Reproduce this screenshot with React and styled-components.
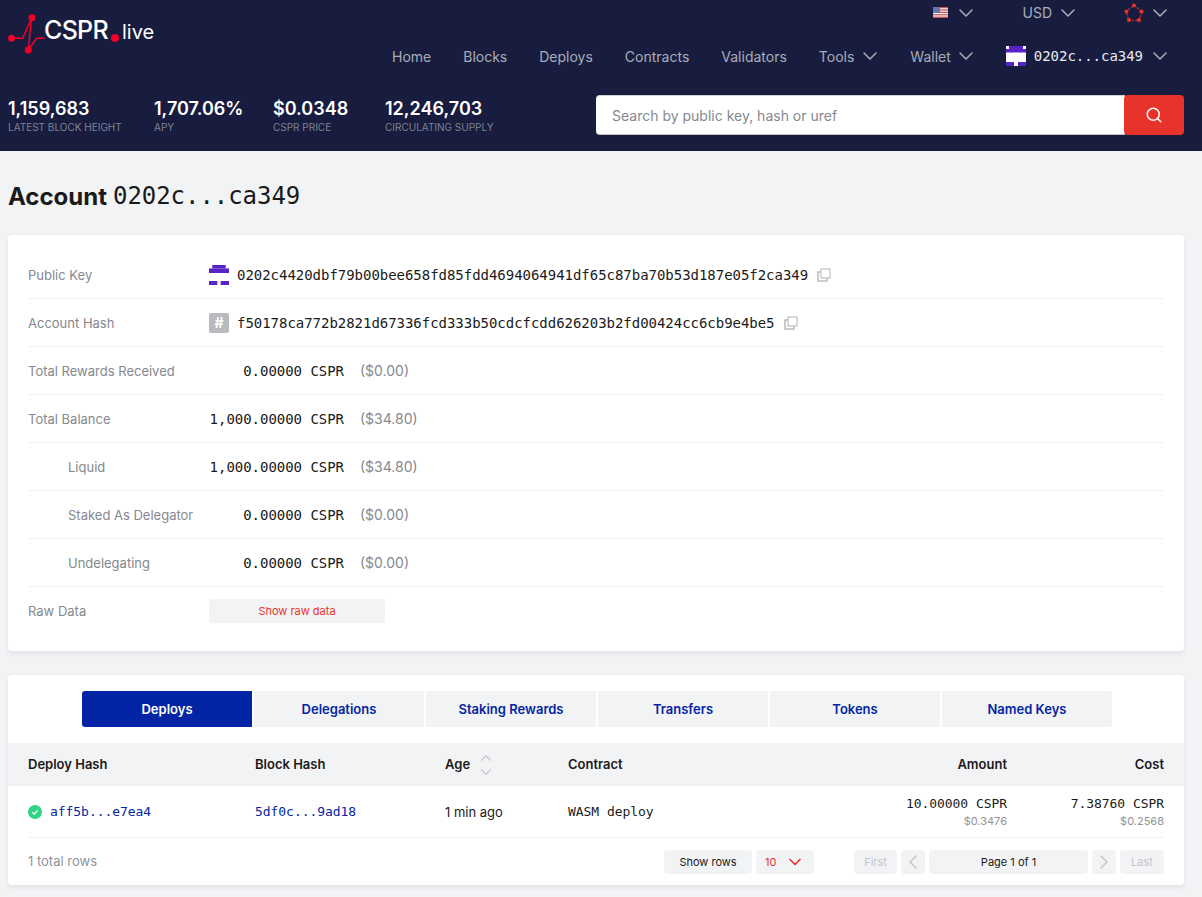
import React from "react";
import styled, { createGlobalStyle } from "styled-components";
import { ChevronDown, ChevronUp, ChevronLeft, ChevronRight, Search } from "lucide-react";

const mono = `"DejaVu Sans Mono", "Liberation Mono", monospace`;

const GlobalStyle = createGlobalStyle`
  html, body {
    margin: 0;
    padding: 0;
    background: #f2f3f5;
    font-family: Inter, "Noto Sans", sans-serif;
    color: #1a1a1a;
  }
  * { box-sizing: border-box; }
`;

const Header = styled.header`
  height: 151px;
  background: #181d40;
  padding: 0 18px 0 8px;
  display: flex;
  flex-direction: column;
`;

const TopArea = styled.div`
  display: flex;
  justify-content: space-between;
  height: 95px;
`;

const Logo = styled.div`
  display: flex;
  align-items: flex-start;
  padding-top: 5px;
  height: 60px;
`;

const LogoWord = styled.div`
  display: flex;
  align-items: baseline;
  color: #fff;
  margin-left: -2px;
  margin-top: 10px;
`;

const LogoMain = styled.span`
  font-size: 25px;
  font-weight: 500;
  letter-spacing: -0.7px;
`;

const LogoDot = styled.span`
  width: 8px;
  height: 8px;
  border-radius: 50%;
  background: #f2002a;
  margin: 0 3px;
  transform: translateY(3px);
`;

const LogoLive = styled.span`
  font-size: 20px;
  font-weight: 400;
`;

const NavArea = styled.div`
  display: flex;
  flex-direction: column;
  align-items: flex-end;
  padding-right: 16px;
`;

const TopSelectors = styled.div`
  height: 25px;
  display: flex;
  gap: 48px;
`;

const Selector = styled.div`
  display: flex;
  align-items: center;
  gap: ${(p) => p.$gap}px;
  font-size: 14px;
  color: #a9adb8;
`;

const Chevron = styled(ChevronDown).attrs({ size: 24, strokeWidth: 1.5, color: "#a9adb8" })`
  margin-right: -4px;
  flex-shrink: 0;
`;

const NavRow = styled.nav`
  display: flex;
  align-items: center;
  gap: 32px;
  height: 36px;
  margin-top: 13px;
`;

const NavLink = styled.a`
  font-size: 14px;
  color: #a9adb8;
  display: flex;
  align-items: center;
  gap: ${(p) => p.$gap || 4}px;
`;

const NavAccount = styled.div`
  display: flex;
  align-items: center;
  font-family: ${mono};
  font-size: 14px;
  letter-spacing: -0.03px;
  color: #e8eaf0;
`;

const NavAccountText = styled.span`
  margin: 0 5px 0 8px;
`;

const StatsArea = styled.div`
  display: flex;
  justify-content: space-between;
  align-items: flex-start;
`;

const Stats = styled.div`
  display: flex;
  padding-top: 3px;
`;

const Stat = styled.div`
  width: ${(p) => p.$width}px;
`;

const StatValue = styled.div`
  font-size: 18px;
  line-height: 22px;
  font-weight: 600;
  color: #fff;
`;

const StatLabel = styled.div`
  font-size: 10px;
  line-height: 14px;
  color: #7d8290;
  text-transform: uppercase;
  white-space: nowrap;
`;

const SearchBox = styled.div`
  display: flex;
  width: 588px;
  height: 40px;
`;

const SearchInput = styled.div`
  flex: 1;
  background: #fff;
  border-bottom: 1px solid #bdbdbd;
  border-top: 1px solid #d0d0d0;
  border-radius: 4px 0 0 4px;
  display: flex;
  align-items: center;
  padding-left: 16px;
  font-size: 14px;
  color: #85888f;
`;

const SearchButton = styled.button`
  width: 60px;
  border: none;
  background: #e8332a;
  border-radius: 4px;
  margin-left: -1px;
  display: flex;
  align-items: center;
  justify-content: center;
  color: #fff;
`;

const Main = styled.main`
  padding: 0 18px 12px 8px;
`;

const Title = styled.h1`
  margin: 0;
  height: 84px;
  display: flex;
  align-items: center;
  gap: 6px;
  font-size: 24px;
  font-weight: 700;
  color: #1a1a1a;
  padding-top: 6px;
`;

const TitleHash = styled.span`
  font-family: ${mono};
  font-weight: 400;
  letter-spacing: -0.05px;
`;

const Card = styled.section`
  background: #fff;
  border-radius: 4px;
  box-shadow: 0 2px 5px rgba(30, 40, 70, 0.08);
  padding: ${(p) => p.$padding};
  margin-bottom: 24px;
  &:last-child { margin-bottom: 0; }
`;

const InfoRow = styled.div`
  display: flex;
  align-items: center;
  height: 48px;
  border-bottom: 1px solid ${(p) => (p.$last ? "transparent" : "#f0f1f3")};
`;

const InfoLabel = styled.div`
  width: 181px;
  padding-left: ${(p) => (p.$indent ? 40 : 0)}px;
  font-size: 13px;
  color: #85888f;
  white-space: nowrap;
`;

const InfoValue = styled.div`
  display: flex;
  align-items: center;
`;

const MonoText = styled.span`
  font-family: ${mono};
  font-size: 14px;
  letter-spacing: -0.03px;
  color: #1a1a1a;
  white-space: nowrap;
`;

const HashText = styled(MonoText)`
  margin-left: 8px;
`;

const Amount = styled(MonoText)`
  width: 135px;
  text-align: right;
`;

const Fiat = styled.span`
  margin-left: 16px;
  font-size: 14px;
  color: #85888f;
`;

const HashBadge = styled.span`
  width: 20px;
  height: 20px;
  border-radius: 2px;
  background: #b9babd;
  color: #fff;
  font-size: 14px;
  font-weight: 700;
  display: flex;
  align-items: center;
  justify-content: center;
`;

const CopyWrap = styled.span`
  display: inline-flex;
  margin-left: 9px;
`;

const RawButton = styled.button`
  width: 176px;
  height: 24px;
  border: none;
  border-radius: 3px;
  background: #f2f3f5;
  color: #e8332a;
  font-family: inherit;
  font-size: 11px;
`;

const Tabs = styled.div`
  display: flex;
  justify-content: center;
  gap: 2px;
  margin-bottom: 16px;
  padding-left: 2px;
`;

const Tab = styled.div`
  width: 170px;
  height: 36px;
  display: flex;
  align-items: center;
  justify-content: center;
  font-size: 13px;
  font-weight: 600;
  color: ${(p) => (p.$active ? "#fff" : "#0325a5")};
  background: ${(p) => (p.$active ? "#0325a5" : "#f2f3f5")};
  border-radius: ${(p) => (p.$first ? "3px 0 0 3px" : p.$end ? "0 3px 3px 0" : "0")};
`;

const columns = "227px 190px 123px 1fr 157px 157px";

const TableHead = styled.div`
  display: grid;
  grid-template-columns: ${columns};
  align-items: center;
  height: 43px;
  padding: 0 20px 2px;
  background: #f2f3f5;
`;

const HeadCell = styled.div`
  display: flex;
  align-items: center;
  gap: 7px;
  font-size: 13px;
  font-weight: 600;
  color: #1a1a1a;
  justify-content: ${(p) => (p.$right ? "flex-end" : "flex-start")};
`;

const SortArrows = styled.span`
  display: flex;
  flex-direction: column;
  color: #c4c5c9;
  margin-top: 2px;
  svg { display: block; margin: -2px 0; }
`;

const TableBody = styled.div`
  padding: 0 20px;
`;

const TableRow = styled.div`
  display: grid;
  grid-template-columns: ${columns};
  align-items: center;
  height: 52px;
  border-bottom: 1px solid #f0f1f3;
`;

const Cell = styled.div`
  display: flex;
  align-items: ${(p) => (p.$right ? "flex-end" : "center")};
  flex-direction: ${(p) => (p.$right ? "column" : "row")};
  gap: ${(p) => (p.$right ? 3 : 8)}px;
`;

const LinkHash = styled.a`
  font-family: ${mono};
  font-size: 13px;
  letter-spacing: -0.05px;
  color: #0325a5;
`;

const PlainMono = styled.span`
  font-family: ${mono};
  font-size: 13px;
  letter-spacing: -0.05px;
  color: #1a1a1a;
`;

const AgeText = styled.span`
  font-size: 13px;
  color: #1a1a1a;
`;

const SubFiat = styled.span`
  font-size: 11px;
  color: #919398;
`;

const Footer = styled.div`
  display: flex;
  align-items: center;
  justify-content: space-between;
  height: 47px;
  padding: 0 20px;
`;

const RowCount = styled.span`
  font-size: 13px;
  color: #919398;
  margin-top: -1px;
`;

const Pager = styled.div`
  display: flex;
  align-items: center;
`;

const PagerGroup = styled.div`
  display: flex;
  gap: 4px;
  margin-left: ${(p) => p.$offset || 0}px;
`;

const PagerButton = styled.div`
  width: ${(p) => p.$width}px;
  height: 24px;
  border-radius: 4px;
  background: #f2f3f5;
  display: flex;
  align-items: center;
  justify-content: ${(p) => (p.$spread ? "space-between" : "center")};
  padding: ${(p) => (p.$spread ? "0 9px" : "0")};
  font-size: 11px;
  color: ${(p) => (p.$red ? "#e8332a" : p.$muted ? "#c4c5c9" : "#1a1a1a")};
`;

const Logomark = () => (
  <svg width="38" height="50" viewBox="0 0 38 50">
    <path d="M3 33.3H14.7L23.5 13L20.3 45L28.7 33.3H37" stroke="#f2002a" strokeWidth="1.5" fill="none" />
    <g fill="#f2002a">
      <circle cx="3.5" cy="33.3" r="3.5" />
      <circle cx="24" cy="12.7" r="3.5" />
      <circle cx="20.3" cy="45" r="3.5" />
    </g>
  </svg>
);

const Flag = () => (
  <svg width="15" height="11" viewBox="0 0 15 11">
    <rect width="15" height="11" fill="#f4eeee" />
    <g fill="#c9505a">
      <rect y="0" width="15" height="1.2" />
      <rect y="2.4" width="15" height="1.2" />
      <rect y="4.8" width="15" height="1.2" />
      <rect y="7.2" width="15" height="1.2" />
      <rect y="9.6" width="15" height="1.4" />
    </g>
    <rect width="7" height="6" fill="#6a74a8" />
  </svg>
);

const NetworkIcon = () => (
  <svg width="20" height="20" viewBox="0 0 20 20">
    <path d="M10 2.5L18 8.5L15 17.5H5L2 8.5Z" fill="none" stroke="#e8332a" strokeWidth="1.2" strokeDasharray="2 1.5" />
    <g fill="#e8332a">
      <circle cx="10" cy="2.5" r="2" />
      <circle cx="17.5" cy="8.5" r="2" />
      <circle cx="15" cy="17" r="2" />
      <circle cx="5" cy="17" r="2" />
      <circle cx="2.5" cy="8.5" r="2" />
    </g>
  </svg>
);

const NavAvatar = () => (
  <svg width="20" height="20" viewBox="0 0 20 20">
    <rect width="20" height="20" rx="1.5" fill="#5a23c8" />
    <rect y="6.5" width="20" height="9.5" fill="#fff" />
    <rect width="3" height="3" fill="#fff" />
    <rect x="17" width="3" height="3" fill="#fff" />
    <rect x="8" y="16" width="4" height="4" fill="#fff" />
  </svg>
);

const KeyAvatar = () => (
  <svg width="20" height="20" viewBox="0 0 20 20">
    <g fill="#5a23c8">
      <rect x="3.3" width="13.4" height="3.4" />
      <rect y="3.4" width="20" height="4.6" />
      <rect y="16" width="8.3" height="4" />
      <rect x="11.7" y="16" width="8.3" height="4" />
    </g>
  </svg>
);

const CopyIcon = () => (
  <svg width="14" height="14" viewBox="0 0 14 14" fill="none" stroke="#bdbec2" strokeWidth="1.2">
    <rect x="4" y="1" width="9" height="9" />
    <path d="M4 4H1V13H10V10" strokeWidth="1.6" />
  </svg>
);

const CheckBadge = () => (
  <svg width="14" height="14" viewBox="0 0 14 14">
    <circle cx="7" cy="7" r="7" fill="#2fd485" />
    <path d="M4.2 7.2L6.2 9L9.8 5.4" fill="none" stroke="#fff" strokeWidth="1.3" />
  </svg>
);

const stats = [
  { value: "1,159,683", label: "Latest Block Height", width: 146 },
  { value: "1,707.06%", label: "APY", width: 119 },
  { value: "$0.0348", label: "CSPR Price", width: 112 },
  { value: "12,246,703", label: "Circulating Supply", width: 120 },
];

const accountRows = [
  { label: "Total Rewards Received", amount: "0.00000 CSPR", fiat: "($0.00)" },
  { label: "Total Balance", amount: "1,000.00000 CSPR", fiat: "($34.80)" },
  { label: "Liquid", amount: "1,000.00000 CSPR", fiat: "($34.80)", indent: true },
  { label: "Staked As Delegator", amount: "0.00000 CSPR", fiat: "($0.00)", indent: true },
  { label: "Undelegating", amount: "0.00000 CSPR", fiat: "($0.00)", indent: true },
];

const tabs = ["Deploys", "Delegations", "Staking Rewards", "Transfers", "Tokens", "Named Keys"];

export default function App() {
  return (
    <>
      <GlobalStyle />
      <Header>
        <TopArea>
          <Logo>
            <Logomark />
            <LogoWord>
              <LogoMain>CSPR</LogoMain>
              <LogoDot />
              <LogoLive>live</LogoLive>
            </LogoWord>
          </Logo>
          <NavArea>
            <TopSelectors>
              <Selector $gap={6}>
                <Flag />
                <Chevron />
              </Selector>
              <Selector $gap={4}>
                USD
                <Chevron />
              </Selector>
              <Selector $gap={4}>
                <NetworkIcon />
                <Chevron />
              </Selector>
            </TopSelectors>
            <NavRow>
              <NavLink>Home</NavLink>
              <NavLink>Blocks</NavLink>
              <NavLink>Deploys</NavLink>
              <NavLink>Contracts</NavLink>
              <NavLink>Validators</NavLink>
              <NavLink>
                Tools
                <Chevron />
              </NavLink>
              <NavLink $gap={3}>
                Wallet
                <Chevron />
              </NavLink>
              <NavAccount>
                <NavAvatar />
                <NavAccountText>0202c...ca349</NavAccountText>
                <Chevron />
              </NavAccount>
            </NavRow>
          </NavArea>
        </TopArea>
        <StatsArea>
          <Stats>
            {stats.map((s) => (
              <Stat key={s.label} $width={s.width}>
                <StatValue>{s.value}</StatValue>
                <StatLabel>{s.label}</StatLabel>
              </Stat>
            ))}
          </Stats>
          <SearchBox>
            <SearchInput>Search by public key, hash or uref</SearchInput>
            <SearchButton>
              <Search size={18} strokeWidth={2} />
            </SearchButton>
          </SearchBox>
        </StatsArea>
      </Header>
      <Main>
        <Title>
          Account <TitleHash>0202c...ca349</TitleHash>
        </Title>
        <Card $padding="16px 20px 16px">
          <InfoRow>
            <InfoLabel>Public Key</InfoLabel>
            <InfoValue>
              <KeyAvatar />
              <HashText>0202c4420dbf79b00bee658fd85fdd4694064941df65c87ba70b53d187e05f2ca349</HashText>
              <CopyWrap>
                <CopyIcon />
              </CopyWrap>
            </InfoValue>
          </InfoRow>
          <InfoRow>
            <InfoLabel>Account Hash</InfoLabel>
            <InfoValue>
              <HashBadge>#</HashBadge>
              <HashText>f50178ca772b2821d67336fcd333b50cdcfcdd626203b2fd00424cc6cb9e4be5</HashText>
              <CopyWrap>
                <CopyIcon />
              </CopyWrap>
            </InfoValue>
          </InfoRow>
          {accountRows.map((r) => (
            <InfoRow key={r.label}>
              <InfoLabel $indent={r.indent}>{r.label}</InfoLabel>
              <InfoValue>
                <Amount>{r.amount}</Amount>
                <Fiat>{r.fiat}</Fiat>
              </InfoValue>
            </InfoRow>
          ))}
          <InfoRow $last>
            <InfoLabel>Raw Data</InfoLabel>
            <InfoValue>
              <RawButton>Show raw data</RawButton>
            </InfoValue>
          </InfoRow>
        </Card>
        <Card $padding="16px 0 0">
          <Tabs>
            {tabs.map((t, i) => (
              <Tab key={t} $active={i === 0} $first={i === 0} $end={i === tabs.length - 1}>
                {t}
              </Tab>
            ))}
          </Tabs>
          <TableHead>
            <HeadCell>Deploy Hash</HeadCell>
            <HeadCell>Block Hash</HeadCell>
            <HeadCell>
              Age
              <SortArrows>
                <ChevronUp size={18} strokeWidth={1.5} />
                <ChevronDown size={18} strokeWidth={1.5} />
              </SortArrows>
            </HeadCell>
            <HeadCell>Contract</HeadCell>
            <HeadCell $right>Amount</HeadCell>
            <HeadCell $right>Cost</HeadCell>
          </TableHead>
          <TableBody>
            <TableRow>
              <Cell>
                <CheckBadge />
                <LinkHash>aff5b...e7ea4</LinkHash>
              </Cell>
              <Cell>
                <LinkHash>5df0c...9ad18</LinkHash>
              </Cell>
              <Cell>
                <AgeText>1 min ago</AgeText>
              </Cell>
              <Cell>
                <PlainMono>WASM deploy</PlainMono>
              </Cell>
              <Cell $right>
                <PlainMono>10.00000 CSPR</PlainMono>
                <SubFiat>$0.3476</SubFiat>
              </Cell>
              <Cell $right>
                <PlainMono>7.38760 CSPR</PlainMono>
                <SubFiat>$0.2568</SubFiat>
              </Cell>
            </TableRow>
          </TableBody>
          <Footer>
            <RowCount>1 total rows</RowCount>
            <Pager>
              <PagerGroup>
                <PagerButton $width={88}>Show rows</PagerButton>
                <PagerButton $width={58} $red $spread>
                  10
                  <ChevronDown size={20} strokeWidth={2} />
                </PagerButton>
              </PagerGroup>
              <PagerGroup $offset={40}>
                <PagerButton $width={43} $muted>First</PagerButton>
                <PagerButton $width={24} $muted>
                  <ChevronLeft size={24} strokeWidth={1.5} />
                </PagerButton>
                <PagerButton $width={159}>Page 1 of 1</PagerButton>
                <PagerButton $width={24} $muted>
                  <ChevronRight size={24} strokeWidth={1.5} />
                </PagerButton>
                <PagerButton $width={44} $muted>Last</PagerButton>
              </PagerGroup>
            </Pager>
          </Footer>
        </Card>
      </Main>
    </>
  );
}
